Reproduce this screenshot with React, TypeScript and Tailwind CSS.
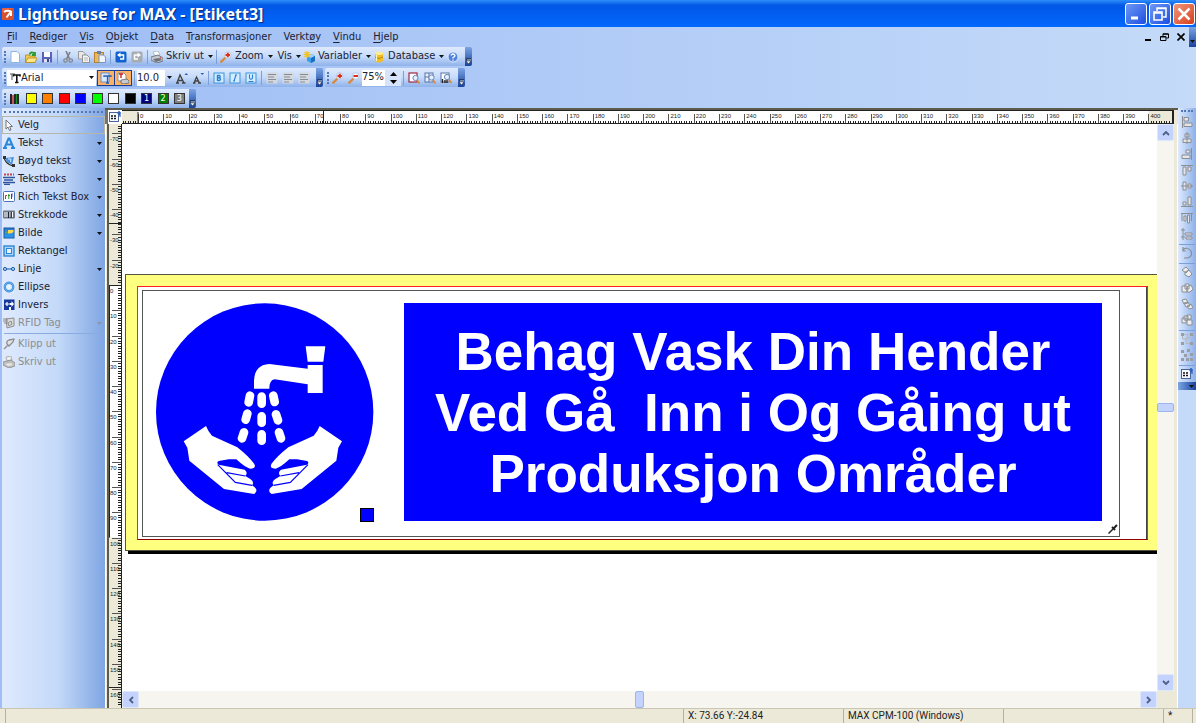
import type { ReactNode } from "react"
import clsx from "clsx"

const ICONS: Record<string, ReactNode> = {
  app: (
    <>
      <rect width="12" height="12" rx="1" fill="#e8603c" />
      <path d="M0 4L12 0V12H0Z" fill="#c8421f" opacity=".5" />
      <path d="M2 4Q5 2 9 3.500M9 3V8M8.500 4L4.500 9.500" stroke="#fff" strokeWidth="2" fill="none" />
    </>
  ),
  new: <path d="M2 .5H8L10.500 3V11.500H2Z" fill="#fff" stroke="#8fb4dc" />,
  open: (
    <>
      <path d="M.5 4H4L5 5H10V11.500H.5Z" fill="#f3c94b" stroke="#b48a1c" strokeWidth=".8" />
      <path d="M3 7H12L10 11.500H.5Z" fill="#ffe88a" stroke="#b48a1c" strokeWidth=".8" />
      <path d="M4.500 3.500Q6 0 9 2.500M7 4H10V1" stroke="#2b9a2b" strokeWidth="1.800" fill="none" />
    </>
  ),
  save: (
    <>
      <rect x="1" y="1" width="10" height="10.500" fill="#5a62b8" />
      <rect x="3" y="1" width="6" height="5" fill="#fff" />
      <rect x="3" y="8" width="6" height="3.500" fill="#dfe2f5" />
      <rect x="6" y="8" width="2" height="3" fill="#3a4190" />
    </>
  ),
  cut: (
    <>
      <path d="M4 0L7.500 8M8 1L4.500 8" stroke="#7c8087" strokeWidth="1.600" />
      <circle cx="3.500" cy="9.500" r="1.700" fill="none" stroke="#85898f" strokeWidth="1.300" />
      <circle cx="8.800" cy="9.500" r="1.700" fill="none" stroke="#85898f" strokeWidth="1.300" />
    </>
  ),
  copy: (
    <>
      <path d="M.5 .5H5L7 2.500V8H.5Z" fill="#e8e8e8" stroke="#909090" strokeWidth=".9" />
      <path d="M4.500 4H9L11.500 6.500V11.500H4.500Z" fill="#f5f5f5" stroke="#8a8a8a" strokeWidth=".9" />
      <path d="M6 7H10M6 9H10" stroke="#a5a5a5" strokeWidth=".8" />
    </>
  ),
  paste: (
    <>
      <rect x=".5" y="1.500" width="9" height="10" fill="#edb956" stroke="#b57a22" strokeWidth=".9" />
      <rect x="3" y="0" width="4" height="3" fill="#6b7fa5" />
      <path d="M5 4H9.500L11.500 6V11.500H5Z" fill="#eef5ff" stroke="#6d8fc7" strokeWidth=".9" />
    </>
  ),
  undo: (
    <>
      <rect x=".5" y=".5" width="11" height="11" rx="1.500" fill="#0f62cf" />
      <path d="M4 4H8.500V8H5" stroke="#fff" strokeWidth="1.500" fill="none" />
      <path d="M5.500 1.500V6.500L2 4Z" fill="#fff" />
    </>
  ),
  redo: (
    <>
      <rect x=".5" y=".5" width="11" height="11" rx="1.500" fill="#a7abb2" />
      <path d="M8 4H3.500V8H7" stroke="#fff" strokeWidth="1.500" fill="none" />
      <path d="M6.500 1.500V6.500L10 4Z" fill="#fff" />
    </>
  ),
  print: (
    <>
      <path d="M2 1L7 0L9 4L4 5Z" fill="#fff" stroke="#9aa" strokeWidth=".7" />
      <path d="M0 6L7 4L12 7V10L6 12L0 9Z" fill="#c5c9d0" stroke="#5f646d" strokeWidth=".8" />
      <path d="M2 8L8 7L11 9L5 11Z" fill="#6d727b" />
      <circle cx="9.500" cy="7" r=".7" fill="#d33" />
    </>
  ),
  zoomIn: (
    <>
      <path d="M.5 11.500L5.500 6.500" stroke="#d78b42" strokeWidth="2.400" />
      <circle cx="7.800" cy="4" r="3.300" fill="#f4f8ff" stroke="#b9c7e2" />
      <path d="M5.500 4H10M7.800 1.800V6.200" stroke="#e02d1b" strokeWidth="2" />
    </>
  ),
  zoomOut: (
    <>
      <path d="M.5 11.500L5.500 6.500" stroke="#d78b42" strokeWidth="2.400" />
      <circle cx="7.800" cy="4" r="3.300" fill="#f4f8ff" stroke="#b9c7e2" />
      <path d="M5.500 4H10" stroke="#e02d1b" strokeWidth="2" />
    </>
  ),
  cube: (
    <>
      <path d="M4 5L9 3L12 5V10L8 12L4 10Z" fill="#3d9ee8" />
      <path d="M4 5L9 3L12 5L8 7Z" fill="#9bd3fa" />
      <path d="M8 7V12L12 10V5Z" fill="#1a6fc2" />
      <path d="M4 0V7M.5 3.500H7.500M1.500 1L6.500 6M6.500 1L1.500 6" stroke="#f4c318" strokeWidth="1.200" />
    </>
  ),
  database: (
    <>
      <path d="M2 2V10Q6 13 10 10V2Z" fill="#f0bf25" />
      <ellipse cx="6" cy="2.300" rx="4" ry="1.800" fill="#ffec90" />
      <path d="M2 6Q6 9 10 6" stroke="#b98a10" fill="none" />
      <path d="M3.500 4V10" stroke="#fff3b5" />
    </>
  ),
  help: (
    <>
      <circle cx="6" cy="6" r="5" fill="#4f82dc" stroke="#dce8fb" />
      <path d="M4 4.500Q4.500 3 6 3T8 4.700Q8 5.700 6 6.500V7.500M6 8.500V9.700" stroke="#fff" strokeWidth="1.300" fill="none" />
    </>
  ),
  fontA: (
    <>
      <path d="M1 2H6M3 2V8" stroke="#888" strokeWidth="1.400" />
      <path d="M4.500 4.500V3H11V4.500M7.800 3V10.500M6 10.500H9.500" stroke="#111" strokeWidth="1.600" fill="none" />
    </>
  ),
  fontDoc: (
    <>
      <rect x="1" y="1" width="8" height="9" fill="#d7e9ff" stroke="#5b88c8" strokeWidth=".9" />
      <path d="M4 5V4H11V5M7.500 4V11M6 11H9" stroke="#2b5fab" strokeWidth="1.300" fill="none" />
    </>
  ),
  fontPrinter: (
    <>
      <path d="M1 1H7L9 3V9H1Z" fill="#fff" stroke="#888" strokeWidth=".9" />
      <path d="M2 2H6M4 2V6" stroke="#d21f1f" strokeWidth="1.400" />
      <path d="M4 8L10 7L12 9V11L6 12L4 11Z" fill="#c7cbd3" stroke="#555" strokeWidth=".7" />
    </>
  ),
  grow: (
    <>
      <path d="M1 11L4 3L8 11M2.500 8.500H7M0 11H3M6 11H9.500" stroke="#444" strokeWidth="1.400" fill="none" />
      <path d="M8.500 3L10.200 1L12 3Z" fill="#2858b4" />
    </>
  ),
  shrink: (
    <>
      <path d="M2 11L4.500 5L7.500 11M3 9H7M1 11H3.500M6 11H9" stroke="#444" strokeWidth="1.300" fill="none" />
      <path d="M8.500 1L10.200 3L12 1Z" fill="#2858b4" />
    </>
  ),
  bold: (
    <>
      <rect x="1" y="1" width="10" height="10" fill="#d3ecff" stroke="#3b95dc" />
      <path d="M4.500 3V9M4.500 3.500H6.500Q8 4.500 6.500 5.800H4.500M6.500 5.800Q8.500 7.500 6.500 8.500H4.500" stroke="#2a7fd0" strokeWidth="1.400" fill="none" />
    </>
  ),
  italic: (
    <>
      <rect x="1" y="1" width="10" height="10" fill="#d3ecff" stroke="#3b95dc" />
      <path d="M7 3L5 9M6 3H8M4 9H6" stroke="#2a7fd0" strokeWidth="1.100" fill="none" />
    </>
  ),
  underline: (
    <>
      <rect x="1" y="1" width="10" height="10" fill="#d3ecff" stroke="#3b95dc" />
      <path d="M4.500 2.500V6Q6 8.500 7.500 6V2.500M3.500 9.500H8.500" stroke="#2a7fd0" strokeWidth="1.100" fill="none" />
    </>
  ),
  alignText: (
    <>
      <rect x=".5" y=".5" width="11" height="11" rx="1" fill="#d4d8de" />
      <path d="M2 2.500H10M2 5H8M2 7.500H10M2 10H7" stroke="#878d98" strokeWidth="1.200" />
    </>
  ),
  zoomPage: (
    <>
      <rect x="1" y="1" width="8" height="9" fill="#fff" stroke="#a12845" strokeWidth="1.200" />
      <circle cx="7.500" cy="6" r="2.600" fill="#e6f0fc" stroke="#6887b8" />
      <path d="M9 8L11.500 11.500" stroke="#d78b42" strokeWidth="1.800" />
    </>
  ),
  zoomGrid: (
    <>
      <rect x="1" y="1" width="8" height="9" fill="#e8f0fc" stroke="#5875a5" />
      <path d="M1 5H9M5 1V10" stroke="#5875a5" />
      <circle cx="7.500" cy="5.500" r="2.600" fill="#e6f0fc" stroke="#6887b8" />
      <path d="M9 8L11.500 11.500" stroke="#d78b42" strokeWidth="1.800" />
    </>
  ),
  zoomBars: (
    <>
      <rect x="1" y="1" width="8" height="9" fill="#fff" stroke="#5875a5" />
      <circle cx="7" cy="5" r="2.600" fill="#e6f0fc" stroke="#6887b8" />
      <path d="M2.500 11V7M5 11V8M7 11V8" stroke="#222" strokeWidth="1.400" />
      <path d="M9 7.500L11.500 11" stroke="#d78b42" strokeWidth="1.800" />
    </>
  ),
  palette: (
    <>
      <path d="M2 1V11M6 1V11" stroke="#111" strokeWidth="1.800" />
      <path d="M4 2V11" stroke="#c22" strokeWidth="1.400" />
      <path d="M9 1V11" stroke="#111" strokeWidth="1.800" />
      <path d="M7.500 1V11" stroke="#1a8d2a" strokeWidth="1.200" />
    </>
  ),
  arrow: <path d="M3 1V10L5 8L6.500 11.500L8 11L6.700 7.500H9.500Z" fill="#fff" stroke="#666" strokeWidth=".9" />,
  text: <path d="M1.500 11L5.500 1.500H6.500L10.500 11M3 7.500H9M0 11H4M8 11H12" stroke="#2a86d8" strokeWidth="2" fill="none" />,
  curved: (
    <>
      <path d="M2 3L11 2L9 10L4 7Z" fill="#4a93dc" />
      <path d="M1 2Q2 9 10 11" stroke="#222" fill="none" strokeWidth="1.200" />
      <rect y="1" width="3" height="3" fill="#333" />
      <rect x="9" y="9" width="3" height="3" fill="#333" />
      <path d="M5 4L8 4L7.500 7" stroke="#d7ebff" fill="none" />
    </>
  ),
  textbox: (
    <>
      <path d="M1 1.500H11" stroke="#c2474f" strokeWidth="2" strokeDasharray="2 1" />
      <path d="M0 4.500H12M1 7H10M0 9.500H12M1 11.500H7" stroke="#31549f" strokeWidth="1.300" />
    </>
  ),
  rtf: (
    <>
      <rect x=".5" y=".5" width="11" height="10" rx="1" fill="#fff" stroke="#4a73b8" />
      <path d="M2.500 8V4.500H4" stroke="#c33" fill="none" />
      <path d="M5.800 3V8M5 4.500H7" stroke="#292" fill="none" />
      <path d="M9.800 3H8.500V8M8 5H9.800" stroke="#33c" fill="none" />
    </>
  ),
  barcode: (
    <>
      <rect y="1.500" width="12" height="8" rx="1" fill="#6c7685" />
      <path d="M2 3V8M4 3V8M7 3V8M9.500 3V8" stroke="#fff" strokeWidth="1" />
      <path d="M5.500 3V9M8.200 3V9" stroke="#1b2430" strokeWidth="1" />
    </>
  ),
  image: (
    <>
      <rect x="1" y="1" width="10" height="10" fill="#2d7fd9" stroke="#19549c" />
      <path d="M1.500 10.500V7Q7 8 10.500 4V10.500Z" fill="#2b93e6" />
      <path d="M5 3H10.500V5Q8 7 5 6.500Z" fill="#ffda44" />
      <path d="M2 4.500H5V6.500H2Z" fill="#55ad5a" />
    </>
  ),
  rect: (
    <>
      <rect x="1" y="1" width="10" height="10" fill="#a9d6fb" stroke="#2f86d5" strokeWidth="1.400" />
      <rect x="3.500" y="3.500" width="5" height="5" fill="#e6f2fe" stroke="#2f86d5" />
    </>
  ),
  line: (
    <>
      <path d="M1 6H11" stroke="#2f6fc0" strokeWidth="1.200" />
      <circle cx="2" cy="6" r="1.600" fill="#9fd0fb" stroke="#1f5ba8" />
      <circle cx="10" cy="6" r="1.600" fill="#9fd0fb" stroke="#1f5ba8" />
    </>
  ),
  ellipse: (
    <>
      <circle cx="6" cy="6" r="4.200" fill="#e6f2fe" stroke="#2f86d5" strokeWidth="2.400" />
      <circle cx="6" cy="6" r="4.200" fill="none" stroke="#8cc6f8" strokeWidth=".8" />
    </>
  ),
  invert: (
    <>
      <rect x="1" y=".5" width="10.500" height="10.500" fill="#16389a" />
      <path d="M6.500 4H8.500V2L11 5L8.500 8V6H6.500Z" fill="#fff" />
      <path d="M2 5H6M4 3V7" stroke="#fff" strokeWidth="1.200" />
      <path d="M6 8H8V11H6Z" fill="#fff" />
    </>
  ),
  rfid: (
    <>
      <path d="M3 2L11 1V9L4 11Z" fill="#dadada" stroke="#8d8d8d" />
      <path d="M0 2H5M0 4H5M1 6H5M5 6L8 4L9 7L6 9Z" stroke="#8d8d8d" fill="none" />
    </>
  ),
  clip: <path d="M1 11L5 7M4 6Q3 3 6 2L11 1L10 4L6 8L4 6" stroke="#8d8d8d" strokeWidth="1.300" fill="#e3e3e3" />,
  printGrey: (
    <>
      <path d="M3 1L8 0L9 4L4 5Z" fill="#eee" stroke="#999" strokeWidth=".7" />
      <path d="M0 6L8 4L12 7V10L6 12L0 9Z" fill="#bdbdbd" stroke="#8a8a8a" strokeWidth=".8" />
      <path d="M2 8L8 7L10 9L5 10Z" fill="#e6e6e6" />
    </>
  ),
  alLeft: <path d="M1.500 0V12M3 1.500H7.500V5H3ZM3 7H11V10.500H3Z" fill="#e5e5e5" stroke="#8a8e95" />,
  alCenter: <path d="M6 0V12M4 2H8V5H4ZM2 7H10V10.500H2Z" fill="#e5e5e5" stroke="#8a8e95" />,
  alRight: <path d="M10.500 0V12M5 2H9V5H5ZM1 7H9V10.500H1Z" fill="#e5e5e5" stroke="#8a8e95" />,
  alTop: <path d="M0 1.500H12M2 3H5V11H2ZM7 3H10V7H7Z" fill="#e5e5e5" stroke="#8a8e95" />,
  alMiddle: <path d="M0 6H12M2 2H5V10H2ZM7 4H10V8H7Z" fill="#e5e5e5" stroke="#8a8e95" />,
  alBottom: <path d="M0 10.500H12M2 6H5V9H2ZM7 1H10V9H7Z" fill="#e5e5e5" stroke="#8a8e95" />,
  spreadH: <path d="M0 1.500H12M1 2V9M10.500 2V9M3 4H5V9H3ZM6.500 3H8.500V11H6.500Z" fill="#e5e5e5" stroke="#8a8e95" />,
  spreadV: <path d="M2 0V12M0 2H4M0 9H4M4 5H11V7H4ZM5 9H11V11H5Z" fill="#e5e5e5" stroke="#8a8e95" />,
  rotate: <path d="M2 3Q6-1 10 4Q12 10 6 11H3M2 0V4H5" fill="none" stroke="#8a8e95" strokeWidth="1.200" />,
  front: <path d="M1 4L5 1L8 4L5 7ZM4 6L8 4L11 8L8 11L4 9Z" fill="#eee" stroke="#8a8e95" />,
  back: <path d="M1 4H6V10H1ZM4 2H8V7H4ZM6 5L10 3L12 7L9 10H6Z" fill="#eee" stroke="#8a8e95" />,
  forward: <path d="M1 2L5 1L7 5L3 6ZM3 5L7 4L9 8L5 9ZM6 8L10 6L12 10L8 11Z" fill="#eee" stroke="#8a8e95" />,
  backward: <path d="M1 4H5V9H1ZM3 2H7V6H3ZM6 1H10V5H6ZM6 6H11V11H6Z" fill="#eee" stroke="#8a8e95" />,
  group: (
    <>
      <path d="M1.500 1.500H7V6H1.500ZM5 5H10.500V10.500H5Z" fill="none" stroke="#b5b8bd" />
      <path d="M0 0H3V3H0ZM9 0H12V3H9ZM0 9H3V12H0ZM9 9H12V12H9Z" fill="#9a9da3" />
    </>
  ),
  ungroup: <path d="M0 1H3V4H0ZM6 0H9V3H6ZM3 5H6V8H3ZM9 4H12V7H9ZM0 9H3V12H0ZM5 9H8V12H5ZM9 9H12V12H9Z" fill="#9a9da3" />,
  ruler: (
    <>
      <rect x=".5" y="1.500" width="9" height="9" fill="#f7f9ff" stroke="#47649e" />
      <path d="M2 5H8M2 7.500H8" stroke="#111" strokeWidth="1.600" strokeDasharray="2 1" />
      <path d="M8 2H11V6M9.500 0L11.500 2L9.500 4" stroke="#2c5cc5" fill="none" strokeWidth="1.200" />
    </>
  ),
}

function Icon({ name }: { name: string }) {
  return (
    <svg viewBox="0 0 12 12" className="h-3 w-3 shrink-0" aria-hidden="true">
      {ICONS[name]}
    </svg>
  )
}

function Caret({ muted }: { muted?: boolean }) {
  return (
    <svg viewBox="0 0 5 3" className="h-[3px] w-[5px] shrink-0" aria-hidden="true">
      <path d="M0 0H5L2.500 3Z" fill={muted ? "#8d96a8" : "#111"} />
    </svg>
  )
}

function Grip() {
  return <div className="mr-px ml-0.5 h-3 w-0 shrink-0 border-l-2 border-dotted border-[#5578b5]" />
}

function Sep() {
  return (
    <div className="flex w-[5px] shrink-0 justify-center">
      <div className="h-3.5 w-px bg-[#7b9fd8]" />
    </div>
  )
}

function IconButton({ name, label }: { name: string; label: string }) {
  return (
    <button aria-label={label} className="flex h-4 w-4 shrink-0 items-center justify-center">
      <Icon name={name} />
    </button>
  )
}

function MenuButton({ icon, label }: { icon?: string; label: string }) {
  return (
    <button className={clsx("flex shrink-0 items-center pr-px", icon ? "pl-px" : "pl-1")}>
      {icon && <Icon name={icon} />}
      <span className={clsx("mr-1", icon && "ml-[3px]")}>{label}</span>
      <Caret />
    </button>
  )
}

function Toolbar({ label, children }: { label: string; children: ReactNode }) {
  return (
    <div role="toolbar" aria-label={label} className="flex h-[19px] shrink-0 overflow-hidden rounded-[2px]">
      <div className="flex items-center bg-linear-to-b from-[#dfeafd] via-[#c5dafa] to-[#8fb2ea] pr-1">
        <Grip />
        {children}
      </div>
      <button
        aria-label={`${label} valg`}
        className="flex w-[7px] items-end justify-center bg-linear-to-b from-[#7da5e4] to-[#18429c] pb-0.5"
      >
        <svg viewBox="0 0 5 6" className="h-1.5 w-[5px]">
          <path d="M0 1H5" stroke="#111" />
          <path d="M1 2H5" stroke="#fff" strokeWidth=".8" />
          <path d="M0 3H5L2.500 6Z" fill="#fff" stroke="#111" strokeWidth=".5" />
        </svg>
      </button>
    </div>
  )
}

const MENUS = [
  ["", "F", "il"],
  ["", "R", "ediger"],
  ["", "V", "is"],
  ["", "O", "bjekt"],
  ["", "D", "ata"],
  ["", "T", "ransformasjoner"],
  ["Verkt", "ø", "y"],
  ["", "V", "indu"],
  ["", "H", "jelp"],
]

const SWATCHES = [
  { name: "Gul", color: "bg-[#ffff00]" },
  { name: "Oransje", color: "bg-[#ff8000]" },
  { name: "Rød", color: "bg-[#ff0000]" },
  { name: "Blå", color: "bg-[#0000ff]" },
  { name: "Grønn", color: "bg-[#00ff00]" },
  { name: "Hvit", color: "bg-white" },
  { name: "Sort", color: "bg-black" },
  { name: "Farge 1", color: "bg-[#000080]", digit: "1" },
  { name: "Farge 2", color: "bg-[#008000]", digit: "2" },
  { name: "Farge 3", color: "bg-[#808080]", digit: "3" },
]

const TOOLS = [
  { icon: "arrow", label: "Velg", active: true },
  { icon: "text", label: "Tekst", menu: true },
  { icon: "curved", label: "Bøyd tekst", menu: true },
  { icon: "textbox", label: "Tekstboks", menu: true },
  { icon: "rtf", label: "Rich Tekst Box", menu: true },
  { icon: "barcode", label: "Strekkode", menu: true },
  { icon: "image", label: "Bilde", menu: true },
  { icon: "rect", label: "Rektangel" },
  { icon: "line", label: "Linje", menu: true },
  { icon: "ellipse", label: "Ellipse" },
  { icon: "invert", label: "Invers" },
  { icon: "rfid", label: "RFID Tag", menu: true, disabled: true },
]

const ALIGN_GROUPS = [
  ["alLeft", "alCenter", "alRight", "alTop", "alMiddle", "alBottom", "spreadH", "spreadV"],
  ["rotate"],
  ["front", "back", "forward", "backward"],
  ["group", "ungroup"],
  ["ruler"],
]

// screen pixels per millimetre at 75% zoom
const SCALE = 2.526

function TitleBar() {
  const box = "flex h-[22px] w-[22px] items-center justify-center rounded-[3px] border border-white"
  return (
    <header className="flex h-[27px] shrink-0 items-center gap-1 bg-linear-to-b from-[#2f8dfb] via-[#0257e6] via-20% to-[#0268fe] pr-px pl-0.5">
      <Icon name="app" />
      <h1 className="flex-1 font-['Noto_Sans'] text-[16px] leading-5 font-bold text-white [text-shadow:1px_1px_1px_#0a2a80]">
        Lighthouse for MAX - [Etikett3]
      </h1>
      <div className="flex gap-0.5">
        <button aria-label="Minimer" className={clsx(box, "bg-linear-to-br from-[#6f97f5] to-[#1c4be0]")}>
          <svg viewBox="0 0 14 14" className="h-3.5 w-3.5">
            <path d="M2 11H9" stroke="#fff" strokeWidth="3" />
          </svg>
        </button>
        <button aria-label="Gjenopprett" className={clsx(box, "bg-linear-to-br from-[#6f97f5] to-[#1c4be0]")}>
          <svg viewBox="0 0 14 14" className="h-3.5 w-3.5">
            <path d="M4 4V1H13V10H10M4 1.500H13" stroke="#fff" strokeWidth="1.500" fill="none" />
            <path d="M1 5H9V13H1ZM1 6H9" stroke="#fff" strokeWidth="1.600" fill="none" />
          </svg>
        </button>
        <button aria-label="Lukk" className={clsx(box, "bg-linear-to-br from-[#f0957a] to-[#d53c12]")}>
          <svg viewBox="0 0 14 14" className="h-3.5 w-3.5">
            <path d="M1.500 1.500L12.500 12.500M12.500 1.500L1.500 12.500" stroke="#fff" strokeWidth="2.500" />
          </svg>
        </button>
      </div>
    </header>
  )
}

function MenuBar() {
  return (
    <nav className="flex h-5 shrink-0 items-center gap-3 pl-[7px]">
      {MENUS.map(([pre, key, post]) => (
        <button key={pre + key + post} className="leading-4">
          {pre}
          <span className="underline underline-offset-2">{key}</span>
          {post}
        </button>
      ))}
      <div className="ml-auto flex h-full items-center gap-1">
        <div className="flex items-center gap-2">
          <button aria-label="Minimer dokument">
            <svg viewBox="0 0 8 8" className="block h-2 w-2">
              <path d="M1 7H7" stroke="#000" strokeWidth="2" />
            </svg>
          </button>
          <button aria-label="Gjenopprett dokument">
            <svg viewBox="0 0 9 8" className="block h-2 w-[9px]">
              <path d="M3 3V.8H8.500V5H6.500M.5 3.500H6V7.500H.5ZM.5 4H6M3 1.200H8" stroke="#000" fill="none" />
            </svg>
          </button>
          <button aria-label="Lukk dokument">
            <svg viewBox="0 0 8 8" className="block h-2 w-2">
              <path d="M.5 .5L7.500 7.500M7.500 .5L.5 7.500" stroke="#000" strokeWidth="1.700" />
            </svg>
          </button>
        </div>
        <div className="flex h-full w-[7px] items-end justify-center bg-linear-to-b from-[#7da5e4] to-[#18429c] pb-1">
          <Caret />
        </div>
      </div>
    </nav>
  )
}

function Toolbars() {
  return (
    <div className="flex shrink-0 flex-col gap-0.5 pl-0.5">
      <div className="flex">
        <Toolbar label="Standard">
          <IconButton name="new" label="Ny" />
          <IconButton name="open" label="Åpne" />
          <IconButton name="save" label="Lagre" />
          <Sep />
          <IconButton name="cut" label="Klipp" />
          <IconButton name="copy" label="Kopier" />
          <IconButton name="paste" label="Lim inn" />
          <Sep />
          <IconButton name="undo" label="Angre" />
          <IconButton name="redo" label="Gjør om" />
          <Sep />
          <MenuButton icon="print" label="Skriv ut" />
          <Sep />
          <MenuButton icon="zoomIn" label="Zoom" />
          <MenuButton label="Vis" />
          <MenuButton icon="cube" label="Variabler" />
          <MenuButton icon="database" label="Database" />
          <IconButton name="help" label="Hjelp" />
        </Toolbar>
      </div>
      <div className="flex gap-0.5">
        <Toolbar label="Tekst">
          <div className="flex h-4 items-center bg-white px-0.5">
            <Icon name="fontA" />
            <select aria-label="Skrift" className="h-4 w-[68px] appearance-none bg-white">
              <option>Arial</option>
            </select>
            <Caret />
          </div>
          <div className="ml-px flex">
            <button aria-label="Skjermskrifter" className="border border-[#1b3f94] bg-[#fdb266] px-0.5 py-px">
              <Icon name="fontDoc" />
            </button>
            <button aria-label="Skriverskrifter" className="-ml-px border border-[#1b3f94] bg-[#fdb266] px-0.5 py-px">
              <Icon name="fontPrinter" />
            </button>
          </div>
          <Sep />
          <select aria-label="Størrelse" className="h-4 w-7 appearance-none bg-white">
            <option>10.0</option>
          </select>
          <div className="px-0.5">
            <Caret />
          </div>
          <IconButton name="grow" label="Større" />
          <IconButton name="shrink" label="Mindre" />
          <Sep />
          <IconButton name="bold" label="Fet" />
          <IconButton name="italic" label="Kursiv" />
          <IconButton name="underline" label="Understreket" />
          <Sep />
          <IconButton name="alignText" label="Venstrejuster" />
          <IconButton name="alignText" label="Midtstill" />
          <IconButton name="alignText" label="Høyrejuster" />
        </Toolbar>
        <Toolbar label="Zoom">
          <IconButton name="zoomIn" label="Zoom inn" />
          <IconButton name="zoomOut" label="Zoom ut" />
          <input aria-label="Zoomnivå" defaultValue="75%" className="h-4 w-[23px] bg-white" />
          <div className="flex w-4 flex-col items-center gap-1 bg-[#d5e4fb] py-0.5">
            <button aria-label="Øk" className="rotate-180">
              <svg viewBox="0 0 7 4" className="block h-1 w-[7px]">
                <path d="M0 0H7L3.500 4Z" />
              </svg>
            </button>
            <button aria-label="Minsk">
              <svg viewBox="0 0 7 4" className="block h-1 w-[7px]">
                <path d="M0 0H7L3.500 4Z" />
              </svg>
            </button>
          </div>
          <Sep />
          <IconButton name="zoomPage" label="Hele siden" />
          <IconButton name="zoomGrid" label="Objekter" />
          <IconButton name="zoomBars" label="Strekkode" />
        </Toolbar>
      </div>
      <div className="flex">
        <Toolbar label="Farger">
          <IconButton name="palette" label="Palett" />
          <div className="ml-[3px] flex w-[159px] items-center justify-between">
            {SWATCHES.map(({ name, color, digit }) => (
              <button
                key={name}
                aria-label={name}
                className={clsx("h-[11px] w-[11px] border border-[#333] text-[9px] leading-[9px] text-white", color)}
              >
                {digit}
              </button>
            ))}
          </div>
        </Toolbar>
      </div>
    </div>
  )
}

function ToolPanel() {
  return (
    <aside className="w-[105px] shrink-0 border-l-2 border-[#9ebef5] bg-linear-to-r from-[#dfeafe] via-[#c3d9f8] via-55% to-[#7fa5e3] pt-[3px]">
      <div className="mx-0.5 mb-[3px] border-t-2 border-dotted border-[#5578b5]" />
      {TOOLS.map(({ icon, label, menu, active, disabled }) => (
        <button
          key={label}
          disabled={disabled}
          className={clsx(
            "flex h-[18px] w-full items-center gap-[3px] border pr-0.5 text-left",
            active ? "border-[#b5b5a8]" : "border-transparent",
            disabled && "text-[#8d8d8d]",
          )}
        >
          <Icon name={icon} />
          <span className="flex-1 whitespace-nowrap">{label}</span>
          {menu && <Caret muted={disabled} />}
        </button>
      ))}
      <div className="mx-0.5 my-px border-t border-[#8aabdf]" />
      {[
        { icon: "clip", label: "Klipp ut" },
        { icon: "printGrey", label: "Skriv ut" },
      ].map(({ icon, label }) => (
        <button key={label} disabled className="flex h-[18px] w-full items-center gap-[3px] pl-px text-[#8d8d8d]">
          <Icon name={icon} />
          {label}
        </button>
      ))}
    </aside>
  )
}

function TopRuler() {
  const zero = 16
  const ticks = Array.from({ length: 415 }, (_, i) => i - 6)
  return (
    <svg className="h-3.5 min-w-0 flex-1 border-t border-r-2 border-[#222] bg-[#ece9d8]" aria-hidden="true">
      <rect x={zero} width={400 * SCALE} height="14" fill="#fff" />
      {ticks.map((t) => (
        <path
          key={t}
          d={`M${Math.round(zero + t * SCALE) + 0.5} ${t % 10 === 0 ? 3 : 10}V13`}
          stroke={t % 10 === 0 ? "#555" : "#222"}
        />
      ))}
      <path d={`M${zero} 1V13M201.500 0V13M0 12.500H2000`} stroke="#222" />
      {ticks
        .filter((t) => t >= 0 && t % 10 === 0)
        .map((t) => (
          <text key={t} x={zero + t * SCALE + 2} y="7" fill="#222" className="font-['Liberation_Sans'] text-[6px]">
            {t}
          </text>
        ))}
    </svg>
  )
}

function SideRuler() {
  const zero = 161
  const ticks = Array.from({ length: 230 }, (_, i) => i - 63)
  return (
    <svg className="w-[13px] shrink-0 border-r border-[#222] bg-[#ece9d8]" aria-hidden="true">
      <rect y={zero} width="13" height={100 * SCALE} fill="#fff" />
      {ticks.map((t) => (
        <path key={t} d={`M${t % 10 === 0 ? 3 : 9} ${Math.round(zero + t * SCALE) + 0.5}H12`} stroke={t % 10 === 0 ? "#555" : "#222"} />
      ))}
      <path d={`M0 ${zero + 0.5}H12M.5 ${zero}V${zero + 100 * SCALE}M0 99.500H12M0 563.500H12`} stroke="#222" />
      {ticks
        .filter((t) => t % 10 === 0)
        .map((t) => (
          <text key={t} x="1" y={zero + t * SCALE + 8} fill="#222" className="font-['Liberation_Sans'] text-[6px]">
            {t < 0 ? t - 10 : t}
          </text>
        ))}
    </svg>
  )
}

function Hand() {
  return (
    <>
      <path
        d="M101 439L168 393Q175 411 186 422L262 457Q296 484 313 507Q320 521 300 521Q286 518 259 493H236L206 498Q198 503 206 509L284 524Q295 533 286 543L302 553Q314 562 306 571L314 577Q326 588 312 597L222 582L118 497L112 458Z"
        fill="#fff"
      />
      <path d="M203 509L256 562L306 571M230 533L286 543" fill="none" stroke="#0000ff" strokeWidth="3.500" />
    </>
  )
}

function HandWashSign() {
  return (
    <svg viewBox="0 0 720 720" className="absolute top-[171px] left-7 h-60 w-60" role="img" aria-label="Vask hendene">
      <circle cx="344" cy="351" r="326" fill="#0000ff" />
      <path d="M312 281V257Q314 209 358 207L473 221V210H518V294H473V268L374 253Q358 255 358 281Z" fill="#fff" />
      <path d="M467 154H526L520 200H473Z" fill="#fff" />
      <path
        d="M300 302L296 322M335 305V326M370 302L374 321M292 356L287 374M335 364V383M378 358L384 376M282 412L276 430M335 418V437M387 412L393 430"
        stroke="#fff"
        strokeWidth="26"
        strokeLinecap="round"
      />
      <Hand />
      <g transform="translate(677 0) scale(-1 1)">
        <Hand />
      </g>
    </svg>
  )
}

// Positions below are label coordinates on the free drawing canvas.
function Canvas() {
  return (
    <main className="relative min-w-0 flex-1 overflow-hidden bg-white">
      <div className="absolute top-[427px] -right-2 left-1.5 h-[3px] bg-black" />
      <div className="absolute top-[150px] -right-2 left-[3px] h-[277px] border border-[#55553a] bg-[#ffff80]" />
      <div className="absolute top-[162px] left-[15px] h-[254px] w-[1011px] border border-[#ff2020] border-b-[#900000] bg-white" />
      <div className="absolute top-[163px] left-[1024px] h-[252px] w-px bg-[#444]" />
      <div className="absolute top-[166px] left-5 h-[247px] w-[978px] border border-[#555]" />
      <HandWashSign />
      <div className="absolute top-96 left-[238px] h-[14px] w-[14px] border border-black bg-[#0000ff]" />
      <div className="absolute top-[179px] left-[282px] flex h-[218px] w-[698px] flex-col justify-center bg-[#0000ff] text-center font-['Liberation_Sans',Arial,sans-serif] text-[53px] leading-[61px] font-bold whitespace-pre text-white">
        <p>Behag Vask Din Hender</p>
        <p>Ved Gå  Inn i Og Gåing ut</p>
        <p>Produksjon Områder</p>
      </div>
      <svg viewBox="0 0 10 10" className="absolute top-[400px] left-[986px] h-2.5 w-2.5" aria-hidden="true">
        <path d="M.5 9.500L5 5" stroke="#222" strokeWidth="1.500" />
        <path d="M4 3L7 6M5.500 4.500L9 1" stroke="#222" strokeWidth="2" />
      </svg>
    </main>
  )
}

function ScrollButton({ d, label }: { d: string; label: string }) {
  return (
    <button
      aria-label={label}
      className="flex h-[17px] w-[17px] shrink-0 items-center justify-center rounded-[2px] border border-[#dfe8fb] bg-[#c3d3fd]"
    >
      <svg viewBox="0 0 8 8" className="h-2 w-2">
        <path d={d} fill="none" stroke="#4d6185" strokeWidth="1.800" />
      </svg>
    </button>
  )
}

function Workspace() {
  return (
    <section className="flex min-w-0 flex-1 flex-col border-t-2 border-[#5c5b4c] bg-[#ece9d8]">
      <div className="flex pr-1">
        <div className="flex h-3.5 w-[17px] shrink-0 items-center justify-center border-l-[3px] border-[#77756a] bg-white">
          <Icon name="ruler" />
        </div>
        <TopRuler />
      </div>
      <div className="flex min-h-0 flex-1">
        <div className="w-1 shrink-0 border-r-2 border-l border-l-white border-r-[#5c5b4c]" />
        <SideRuler />
        <div className="flex min-w-0 flex-1 flex-col">
          <div className="flex min-h-0 flex-1">
            <Canvas />
            <div className="flex w-[17px] flex-col bg-[#f6f5f0]">
              <ScrollButton label="Rull opp" d="M1 6L4 3L7 6" />
              <div className="flex-1" />
              <div className="h-[9px] rounded-[2px] border border-[#9db5ee] bg-[#c3d3fd]" />
              <div className="flex-1" />
              <ScrollButton label="Rull ned" d="M1 2L4 5L7 2" />
            </div>
            <div className="w-1 border-r border-white" />
          </div>
          <div className="flex">
            <div className="flex h-[17px] flex-1 bg-[#f6f5f0]">
              <ScrollButton label="Rull til venstre" d="M6 1L3 4L6 7" />
              <div className="flex-1" />
              <div className="w-[9px] rounded-[2px] border border-[#9db5ee] bg-[#c3d3fd]" />
              <div className="flex-1" />
              <ScrollButton label="Rull til høyre" d="M2 1L5 4L2 7" />
            </div>
            <div className="w-[21px] border-r border-white" />
          </div>
        </div>
      </div>
    </section>
  )
}

function AlignBar() {
  return (
    <aside className="w-[18px] shrink-0 bg-[#c4daf8]">
      <div className="flex flex-col items-center bg-linear-to-r from-[#dfeafe] to-[#8db0e8] pt-0.5">
        <div className="mb-0.5 w-3 border-t-2 border-dotted border-[#5578b5]" />
        {ALIGN_GROUPS.map((group, i) => (
          <div key={group[0]} className={clsx("flex flex-col items-center", i > 0 && "mt-0.5 border-t border-[#7b9fd8]")}>
            {group.map((name) => (
              <IconButton key={name} name={name} label={name} />
            ))}
          </div>
        ))}
        <div className="flex h-2 w-full items-center justify-end bg-linear-to-r from-[#7da5e4] to-[#18429c] pr-0.5">
          <Caret />
        </div>
      </div>
    </aside>
  )
}

function StatusBar() {
  const cell = "border-l border-[#b5b2a0] pl-1"
  return (
    <footer className="flex h-[15px] shrink-0 border-t border-[#c9c6b4] bg-[#ece9d8] pr-[3px] pl-[5px] font-[Roboto,sans-serif] text-[10px] leading-[14px] text-[#222]">
      <div className={clsx(cell, "flex-1")} />
      <div className={clsx(cell, "w-40")}>X: 73.66 Y:-24.84</div>
      <div className={clsx(cell, "w-40")}>MAX CPM-100 (Windows)</div>
      <div className={clsx(cell, "w-40")} />
      <div className={clsx(cell, "w-[30px] border-r")}>*</div>
    </footer>
  )
}

export default function App() {
  return (
    <div className="flex h-screen flex-col overflow-hidden bg-linear-to-r from-[#9ebdf5] to-[#c4daf8] font-['DejaVu_Sans_Condensed','Noto_Sans',sans-serif] text-[11px] text-[#1b2233]">
      <TitleBar />
      <MenuBar />
      <Toolbars />
      <div className="flex min-h-0 flex-1">
        <ToolPanel />
        <Workspace />
        <AlignBar />
      </div>
      <StatusBar />
    </div>
  )
}
